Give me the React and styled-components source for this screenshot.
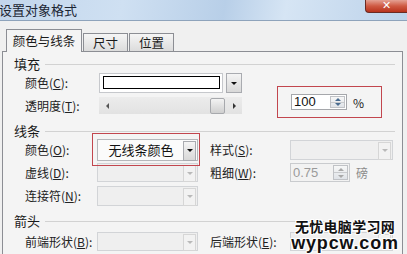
import React from "react";
import styled, { createGlobalStyle } from "styled-components";

const GlobalStyle = createGlobalStyle`
  html, body {
    margin: 0;
    padding: 0;
    background: #f0f0f0;
  }
  body {
    font-family: "Noto Sans CJK SC", "Noto Sans", sans-serif;
    font-size: 12px;
    color: #1a1a1a;
  }
`;

const Dialog = styled.div`
  position: relative;
  width: 407px;
  height: 254px;
  overflow: hidden;
  background: #f0f0f0;
`;

const TitleBar = styled.div`
  position: relative;
  height: 20px;
  border-bottom: 1px solid #8ea3bb;
  background: linear-gradient(
    100deg,
    #c2d6ec 0%,
    #cfe0f2 30%,
    #b8cfe8 55%,
    #d6e5f4 70%,
    #bcd2ea 100%
  );
  display: flex;
  align-items: center;
`;

const Title = styled.div`
  margin-left: -1px;
  font-size: 13px;
  color: #1b2533;
  line-height: 1;
  margin-top: -2px;
`;

const CloseButton = styled.div`
  position: absolute;
  right: 0;
  top: 0;
  width: 41px;
  height: 12px;
  border: 1px solid #6b2a22;
  border-top: none;
  border-right: none;
  border-bottom-left-radius: 4px;
  background: linear-gradient(#e4a193 0%, #cf5a43 50%, #b8321c 100%);
  color: #fff;
  font-family: "DejaVu Sans", sans-serif;
  font-weight: bold;
  font-size: 11px;
  line-height: 11px;
  text-align: center;
`;

const Body = styled.div`
  padding-top: 8px;
`;

const TabRow = styled.div`
  display: flex;
  align-items: flex-end;
  padding-left: 6px;
  margin-bottom: -1px;
  position: relative;
  z-index: 1;
`;

const Tab = styled.div`
  height: ${(p) => (p.$active ? "22px" : "17px")};
  width: ${(p) => p.$w}px;
  margin-right: 1px;
  border: 1px solid #8c8e94;
  border-bottom: ${(p) => (p.$active ? "none" : "1px solid #8c8e94")};
  background: ${(p) =>
    p.$active ? "#f4f4f4" : "linear-gradient(#f5f5f5, #dcdcdc)"};
  font-size: 12.5px;
  line-height: ${(p) => (p.$active ? "21px" : "17px")};
  text-align: center;
`;

const Panel = styled.div`
  margin-left: 2px;
  width: 399px;
  height: 210px;
  border: 1px solid #8c8e94;
  background: #f4f4f4;
`;

const Heading = styled.div`
  display: flex;
  align-items: center;
  height: 14px;
  margin-top: ${(p) => p.$top}px;
  padding-left: 11px;
  padding-right: 7px;
  font-size: 13px;
  line-height: 14px;

  &::after {
    content: "";
    flex: 1;
    height: 1px;
    margin-left: 5px;
    background: #d2d2d2;
  }
`;

const FillSection = styled.div`
  display: flex;
  margin-top: 2px;
  padding-left: 22px;
`;

const FillColumn = styled.div`
  display: flex;
  flex-direction: column;
  gap: 4px;
`;

const FillRow = styled.div`
  display: flex;
  align-items: center;
  height: ${(p) => p.$h}px;
`;

const Label = styled.div`
  width: ${(p) => p.$w}px;
  flex-shrink: 0;
  white-space: nowrap;
  font-size: 12px;
  line-height: 14px;
  color: #222;
`;

const Key = styled.span`
  text-decoration: underline;
`;

const ColorField = styled.div`
  width: 124px;
  height: 20px;
  box-sizing: border-box;
  border: 1px solid #c6c8cc;
  background: #fff;
  padding: 2px 2px 3px 3px;
`;

const Swatch = styled.div`
  height: 100%;
  border: 1px solid #000;
  box-sizing: border-box;
  background: #fff;
`;

const ArrowButton = styled.div`
  width: ${(p) => p.$w || 15}px;
  height: ${(p) => p.$h || 20}px;
  box-sizing: border-box;
  margin-left: ${(p) => p.$gap || 0}px;
  border: 1px solid ${(p) => (p.$disabled ? "#d6d6d6" : "#a9abb0")};
  background: ${(p) =>
    p.$disabled ? "#f2f2f2" : "linear-gradient(#f4f4f4, #d8d8d8)"};
  display: flex;
  align-items: center;
  justify-content: center;
  flex-shrink: 0;

  &::before {
    content: "";
    border-left: 3px solid transparent;
    border-right: 3px solid transparent;
    border-top: 3px solid ${(p) => (p.$disabled ? "#b9b9b9" : "#111")};
  }
`;

const Slider = styled.div`
  width: 143px;
  height: 17px;
  display: flex;
  align-items: center;
  background: linear-gradient(#ececec, #e2e2e2);
`;

const SliderArrow = styled.div`
  width: 0;
  height: 0;
  border-top: 3px solid transparent;
  border-bottom: 3px solid transparent;
  ${(p) =>
    p.$dir === "left"
      ? "border-right: 3px solid #555; margin-left: 7px;"
      : "border-left: 3px solid #333; margin-left: 8px;"}
`;

const Thumb = styled.div`
  width: 15px;
  height: 16px;
  margin-left: auto;
  box-sizing: border-box;
  border: 1px solid #a7a9ad;
  border-radius: 2px;
  background: linear-gradient(#f3f3f3, #cfcfcf);
`;

const SliderEnd = styled.div`
  width: 17px;
  height: 100%;
  display: flex;
  align-items: center;
`;

const Highlight = styled.div`
  position: relative;
  display: flex;
  align-items: center;

  &::after {
    content: "";
    position: absolute;
    top: ${(p) => p.$t}px;
    bottom: ${(p) => p.$b}px;
    left: ${(p) => p.$l}px;
    right: ${(p) => p.$r}px;
    border: 1px solid #c2464e;
    pointer-events: none;
  }
`;

const OpacityBox = styled(Highlight)`
  margin-left: 35px;
  margin-top: 21px;
  height: 16px;
  padding-left: 14px;
`;

const Spin = styled.div`
  display: flex;
  width: ${(p) => p.$w}px;
  height: ${(p) => p.$h}px;
  box-sizing: border-box;
  border: 1px solid ${(p) => (p.$disabled ? "#c9cbce" : "#a5a7ab")};
  background: ${(p) => (p.$disabled ? "#f2f2f2" : "#fff")};
`;

const SpinValue = styled.div`
  flex: 1;
  padding-left: 2px;
  font-family: "Liberation Sans", Arial, sans-serif;
  font-size: 13px;
  line-height: ${(p) => p.$lh}px;
  color: ${(p) => (p.$disabled ? "#9a9a9a" : "#111")};
`;

const SpinButtons = styled.div`
  width: 13px;
  margin: 1px 1px 1px 0;
  display: flex;
  flex-direction: column;
  border: 1px solid #c0c2c6;
  background: linear-gradient(#f7f7f7, #dfe3e8);
`;

const SpinHalf = styled.div`
  flex: 1;
  display: flex;
  align-items: center;
  justify-content: center;
  border-top: ${(p) => (p.$down ? "1px solid #c8cacd" : "none")};

  &::before {
    content: "";
    border-left: 3px solid transparent;
    border-right: 3px solid transparent;
    ${(p) =>
      p.$down
        ? `border-top: 3px solid ${p.$disabled ? "#a8a8a8" : "#4a6c90"};`
        : `border-bottom: 3px solid ${p.$disabled ? "#a8a8a8" : "#4a6c90"};`}
  }
`;

const Unit = styled.div`
  margin-left: 6px;
  font-size: 12px;
  color: ${(p) => (p.$disabled ? "#8a8a8a" : "#222")};
`;

const Grid = styled.div`
  display: grid;
  grid-template-columns: 72px 113px 80px 103px;
  grid-auto-rows: 23px;
  margin-top: ${(p) => p.$top || 0}px;
  padding-left: 22px;
  align-items: center;
`;

const Cell = styled.div`
  display: flex;
  align-items: center;
`;

const Select = styled.div`
  display: flex;
  width: ${(p) => p.$w || 101}px;
  height: ${(p) => p.$h}px;
  box-sizing: border-box;
  border: 1px solid ${(p) => (p.$disabled ? "#d2d4d7" : "#b5b7bb")};
  background: ${(p) => (p.$disabled ? "#efefef" : "#fbfbfb")};
  padding: 1px;
`;

const SelectText = styled.div`
  flex: 1;
  text-align: center;
  font-size: 13px;
  line-height: ${(p) => p.$lh}px;
  color: #111;
`;

const Watermark = styled.div`
  position: absolute;
  left: 290px;
  top: 218px;
  width: 110px;
  text-align: center;
  white-space: nowrap;
  font-weight: bold;
  color: #111;
  display: flex;
  flex-direction: column;
  gap: 1px;
  text-shadow: 1px 0 0 #fff, -1px 0 0 #fff, 0 1px 0 #fff, 0 -1px 0 #fff,
    1px 1px 0 #fff, -1px -1px 0 #fff, 1px -1px 0 #fff, -1px 1px 0 #fff;
`;

const WatermarkCn = styled.div`
  font-family: "Noto Sans CJK SC", sans-serif;
  font-size: 14px;
  letter-spacing: 0.3px;
  line-height: 16px;
`;

const WatermarkEn = styled.div`
  font-family: "Liberation Sans", Arial, sans-serif;
  font-size: 18px;
  line-height: 16px;
  letter-spacing: 0.8px;
`;

function Dropdown({ text, w, h = 20, disabled }) {
  return (
    <Select $w={w} $h={h} $disabled={disabled}>
      <SelectText $lh={h - 4}>{text}</SelectText>
      <ArrowButton $w={13} $h={h - 2} $disabled={disabled} />
    </Select>
  );
}

function SpinBox({ value, w, h, disabled }) {
  return (
    <Spin $w={w} $h={h} $disabled={disabled}>
      <SpinValue $lh={h - 2} $disabled={disabled}>
        {value}
      </SpinValue>
      <SpinButtons>
        <SpinHalf $disabled={disabled} />
        <SpinHalf $down $disabled={disabled} />
      </SpinButtons>
    </Spin>
  );
}

export default function App() {
  return (
    <>
      <GlobalStyle />
      <Dialog>
        <TitleBar>
          <Title>设置对象格式</Title>
          <CloseButton>✕</CloseButton>
        </TitleBar>
        <Body>
          <TabRow>
            <Tab $active $w={74}>颜色与线条</Tab>
            <Tab $w={43}>尺寸</Tab>
            <Tab $w={43}>位置</Tab>
          </TabRow>
          <Panel>
            <Heading $top={5}>填充</Heading>
            <FillSection>
              <FillColumn>
                <FillRow $h={20}>
                  <Label $w={74}>
                    颜色(<Key>C</Key>):
                  </Label>
                  <ColorField>
                    <Swatch />
                  </ColorField>
                  <ArrowButton $w={16} $h={20} $gap={3} />
                </FillRow>
                <FillRow $h={17}>
                  <Label $w={74}>
                    透明度(<Key>T</Key>):
                  </Label>
                  <Slider>
                    <SliderArrow $dir="left" />
                    <Thumb />
                    <SliderEnd>
                      <SliderArrow $dir="right" />
                    </SliderEnd>
                  </Slider>
                </FillRow>
              </FillColumn>
              <OpacityBox $t={-8} $b={-8} $l={0} $r={-18}>
                <SpinBox value="100" w={56} h={16} />
                <Unit>%</Unit>
              </OpacityBox>
            </FillSection>

            <Heading $top={10}>线条</Heading>
            <Grid>
              <Label $w={72}>
                颜色(<Key>O</Key>):
              </Label>
              <Cell>
                <Highlight $t={-6} $b={-5} $l={-5} $r={-2}>
                  <Dropdown text="无线条颜色" h={22} />
                </Highlight>
              </Cell>
              <Label $w={80}>
                样式(<Key>S</Key>):
              </Label>
              <Dropdown w={103} h={20} disabled />

              <Label $w={72}>
                虚线(<Key>D</Key>):
              </Label>
              <Dropdown h={19} disabled />
              <Label $w={80}>
                粗细(<Key>W</Key>):
              </Label>
              <Cell>
                <SpinBox value="0.75" w={60} h={19} disabled />
                <Unit $disabled>磅</Unit>
              </Cell>

              <Label $w={72}>
                连接符(<Key>N</Key>):
              </Label>
              <Dropdown h={20} disabled />
            </Grid>

            <Heading $top={7}>箭头</Heading>
            <Grid $top={2}>
              <Label $w={72}>
                前端形状(<Key>B</Key>):
              </Label>
              <Dropdown h={19} disabled />
              <Label $w={80}>
                后端形状(<Key>E</Key>):
              </Label>
              <Dropdown w={103} h={19} disabled />
            </Grid>
          </Panel>
        </Body>
        <Watermark>
          <WatermarkCn>无忧电脑学习网</WatermarkCn>
          <WatermarkEn>wypcw.com</WatermarkEn>
        </Watermark>
      </Dialog>
    </>
  );
}
